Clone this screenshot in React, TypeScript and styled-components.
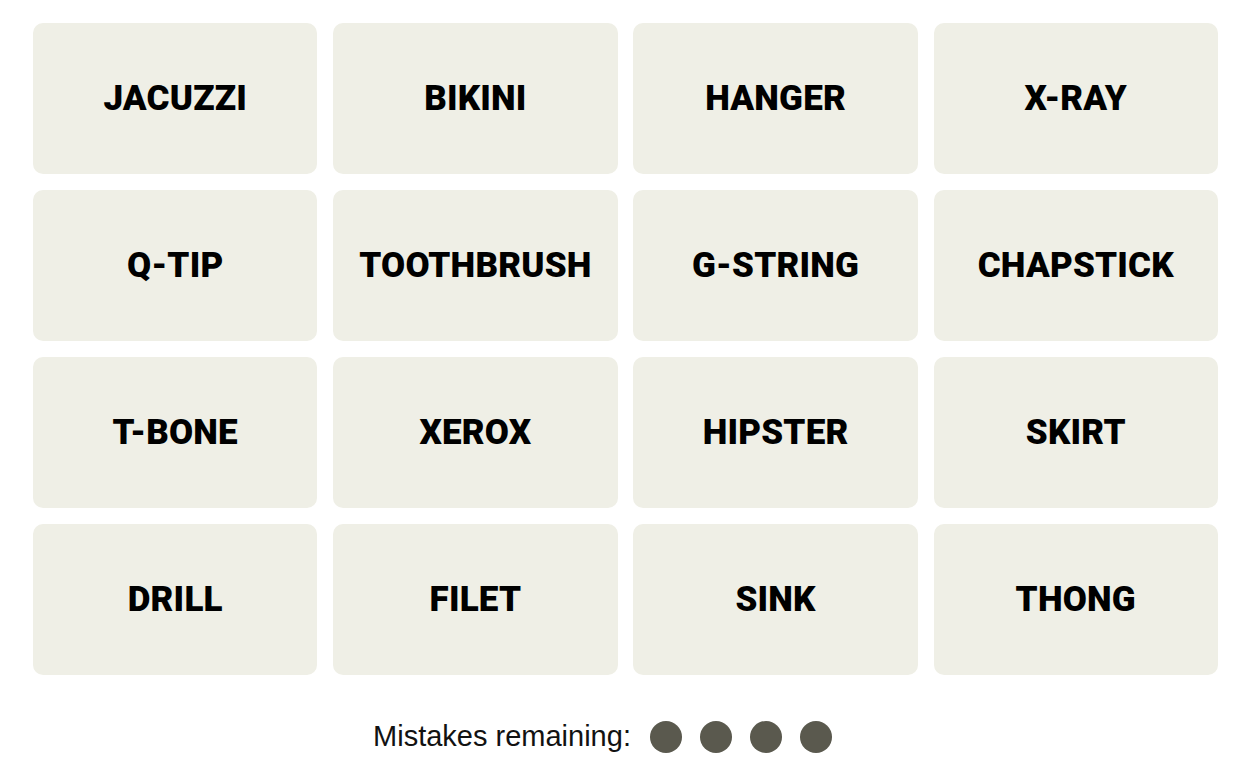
import styled, { createGlobalStyle } from "styled-components";

const GlobalStyle = createGlobalStyle`
    html, body {
        margin: 0;
        padding: 0;
        background: #ffffff;
    }
`;

const Page = styled.main`
    display: flex;
    flex-direction: column;
    gap: 45px;
    padding: 23px 32px 0 33px;
`;

const Board = styled.section`
    display: grid;
    grid-template-columns: repeat(4, 1fr);
    grid-auto-rows: 151px;
    gap: 16px 15.7px;
`;

const Tile = styled.button`
    display: flex;
    align-items: center;
    justify-content: center;
    border: none;
    border-radius: 10px;
    background-color: #efefe6;
    color: #000000;
    font-family: Roboto, "Liberation Sans", sans-serif;
    font-weight: 900;
    font-size: 35px;
    text-transform: uppercase;
    letter-spacing: 0.2px;
    cursor: pointer;
`;

const Mistakes = styled.div`
    display: flex;
    align-items: center;
    justify-content: center;
    gap: 19px;
    padding-right: 46px;
    font-family: "Liberation Sans", Arial, sans-serif;
    font-size: 29px;
    color: #121212;
`;

const Bubbles = styled.div`
    display: flex;
    gap: 18px;
`;

const Bubble = styled.span`
    width: 32px;
    height: 32px;
    border-radius: 50%;
    background-color: #5a594e;
`;

const words = [
    "Jacuzzi", "Bikini", "Hanger", "X-Ray",
    "Q-Tip", "Toothbrush", "G-String", "Chapstick",
    "T-Bone", "Xerox", "Hipster", "Skirt",
    "Drill", "Filet", "Sink", "Thong",
];

export default function App() {
    const mistakesLeft = 4;

    return (
        <>
            <GlobalStyle />
            <Page>
                <Board>
                    {words.map((word) => (
                        <Tile key={word}>{word}</Tile>
                    ))}
                </Board>
                <Mistakes>
                    <span>Mistakes remaining:</span>
                    <Bubbles>
                        {Array.from({ length: mistakesLeft }).map((_, i) => (
                            <Bubble key={i} />
                        ))}
                    </Bubbles>
                </Mistakes>
            </Page>
        </>
    );
}
